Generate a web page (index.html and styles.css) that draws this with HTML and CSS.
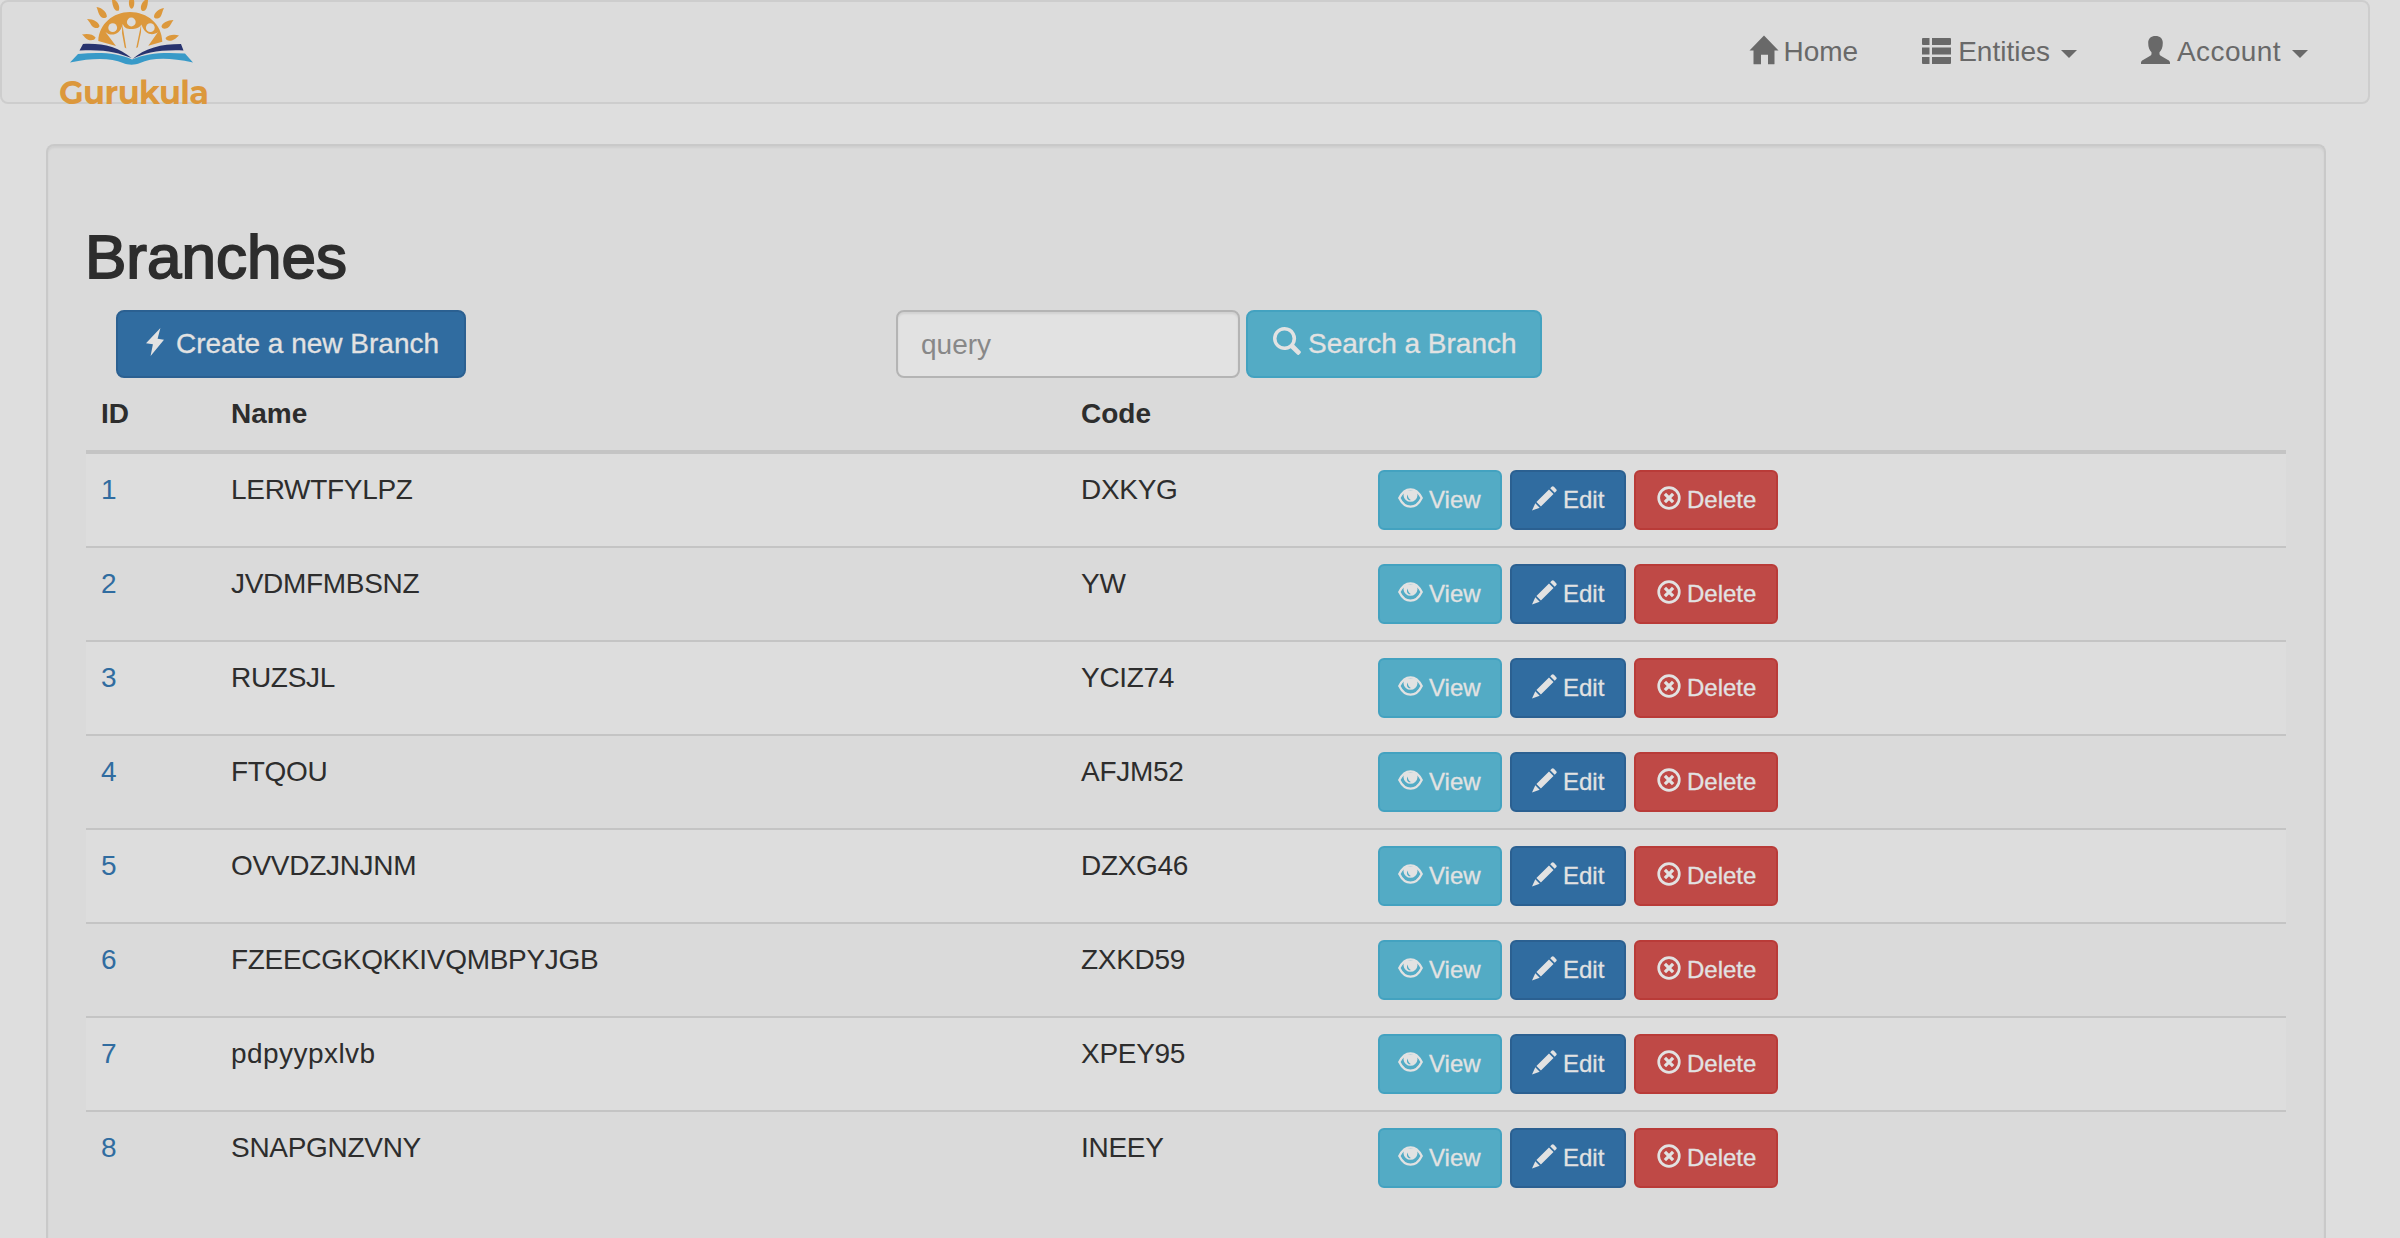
FILE: index.html
```html
<!DOCTYPE html>
<html lang="en">
<head>
<meta charset="utf-8">
<title>Gurukula - Branches</title>
<link rel="stylesheet" href="styles.css">
</head>
<body>
<svg class="sprite" aria-hidden="true">
  <symbol id="i-home" viewBox="0 0 30 30"><path d="M15 .5 29.500 15.500H25.500v13.200a.6.6 0 0 1-.6.6H19v-9.500h-7v9.500H5.100a.6.600 0 0 1-.6-.6V15.500H.5z"/></symbol>
  <symbol id="i-list" viewBox="0 0 29 28"><path d="M1 1h6.500v7H1a1 1 0 0 1-1-1V2a1 1 0 0 1 1-1zM10 1h18a1 1 0 0 1 1 1v5a1 1 0 0 1-1 1H10zM0 10.500h7.500v7H0zM10 10.500h19v7H10zM0 20h7.500v7H1a1 1 0 0 1-1-1zM10 20h19v6a1 1 0 0 1-1 1H10z"/></symbol>
  <symbol id="i-user" viewBox="0 0 29 28"><path d="M14.500 0c4.500 0 7.300 2.600 7.300 6.800 0 4.600-1.200 7.600-3.300 9.400v1.800c0 .8.400 1.300 1.200 1.700l7.300 4.200c1.300.8 2 1.600 2 2.800V28H0v-1.300c0-1.200.7-2 2-2.800l7.300-4.200c.8-.4 1.200-.9 1.200-1.700v-1.800C8.400 14.400 7.200 11.400 7.200 6.800 7.200 2.600 10 0 14.500 0z"/></symbol>
  <symbol id="i-flash" viewBox="0 0 18 28"><path d="M14.400 0 11.600 10.800 18 11.800 4.600 28 6.900 16.200 0 15.200z"/></symbol>
  <symbol id="i-search" viewBox="0 0 28 28"><path fill-rule="evenodd" d="M11.500 0a11.500 11.500 0 0 1 9.700 17.700l6.100 6.200c.8.800.8 1.600.1 2.300l-1.200 1.200c-.7.700-1.500.7-2.300-.1l-6.200-6.100A11.500 11.500 0 1 1 11.500 0zm0 3.500a8 8 0 1 0 0 16 8 8 0 0 0 0-16z"/></symbol>
  <symbol id="i-eye" viewBox="0 0 25 20"><path d="M1.300 10C4 4.500 8 1.300 12.500 1.300S21 4.500 23.700 10C21 15.500 17 18.700 12.500 18.700S4 15.500 1.300 10z" fill="none" stroke="currentColor" stroke-width="2.300"/><path fill-rule="evenodd" d="M7 2.500h11a7 7 0 1 1-11 0zM9.700 6.500c-1.200 1.800-1 4 .6 5.200.8.600 1.800.7 2.500.3-2-1-3-3-3.100-5.500z"/></symbol>
  <symbol id="i-pencil" viewBox="0 0 25 25"><path d="M19.700.8c.7-.7 1.500-.7 2.200 0l2.300 2.400c.7.700.7 1.400 0 2.100l-1.500 1.500L18.200 2.300zM17 3.600 21.500 8.100 8.900 20.500 4.400 16zM3.300 17.300l4.400 4.400L0 24.600z"/></symbol>
  <symbol id="i-remove" viewBox="0 0 24 24"><circle cx="12" cy="12" r="10.300" fill="none" stroke="currentColor" stroke-width="2.700"/><path d="m7.900 7.900 8.200 8.200m0-8.200-8.200 8.200" fill="none" stroke="currentColor" stroke-width="3.300"/></symbol>
</svg>

<nav class="navbar">
  <a class="brand" href="#">
    <svg class="brand-mark" viewBox="0 0 126 66" aria-hidden="true">
      <g fill="#dc983c">
        <path d="M28.300 41C29 24 43 12 60 12s32 12 32.300 29.700L78.300 45.700 88 32C84 35.500 75 36 71.500 24.500 69 28 66 29 61.300 29S54.500 28 52.700 24C50 36 40 36.500 35.500 32L46 46z"/>
        <path d="m52.300 24 4 24.500-1.600-1L52 33zM71.200 24l-5 24 1.600-.8 3.200-15z"/>
        <ellipse cx="61.600" cy="3" rx="2.700" ry="5.800"/>
        <path d="M42 0h3c4 3 5 8 3.800 10.500-3 1.400-6.300-2-6.800-10.500zM78 0h-3c-4 3-5 8-3.300 10.500 3 1.800 6-1 6.300-10.500zM26.500 7c6.500 1 10.300 5.500 10.400 9.500-1.200 2-4 2.200-6.300 0C28.400 14.500 28 10 26.500 7zM94 8c-6 1-10 5-10 9 1 2 4 2 6.300 0C92 15 92 12 94 8zM17 19c7 0 12 3.500 12.500 7-.6 2.500-3 2.400-5.600 1.500C21 26 20 22 17 19zM103.500 20c-6 0-11.500 3-12 6.500.8 2.800 3.700 2.500 6 1.400 3-1.500 3.500-4.900 6-7.900zM12 34.500c5-1.300 11-.5 13.600 3-.8 2.800-4 3-7 2.500-3-.8-4-3.500-6.600-5.500zM109 35.500c-5-1.300-10.500-.7-13.500 2.500.5 2.700 3.500 3 6.500 2.400 3-.8 4.500-2.900 7-4.900z"/>
      </g>
      <g fill="#dcdcdc"><circle cx="42.700" cy="27.700" r="4.400"/><circle cx="61.300" cy="22" r="4.400"/><circle cx="80.300" cy="27.700" r="4.400"/></g>
      <path fill="#27336f" d="M13 44c20-1 35 3 48.500 14C48 52.500 35 49 9.500 50.500zM111 44C91 44 75 48 62.500 59 75 53 89 49.500 113.500 50.500z"/>
      <path fill="#389ac8" d="M8 54c22-2 40-1 54 5.500C76 53 94 52 115 53.500l8 9c-25-5.500-42-4.500-53 .5-5 2.300-12 2.300-17 0-12-5-29-5.500-53-.5z"/>
    </svg>
    <span class="brand-name">Gurukula</span>
  </a>
  <ul class="menu">
    <li><a href="#"><svg class="ic-home"><use href="#i-home"/></svg><span>Home</span></a></li>
    <li><a href="#"><svg class="ic-list"><use href="#i-list"/></svg><span>Entities</span><b class="caret"></b></a></li>
    <li><a href="#"><svg class="ic-user"><use href="#i-user"/></svg><span class="account">Account</span><b class="caret"></b></a></li>
  </ul>
</nav>

<main class="well">
  <h2>Branches</h2>
  <div class="toolbar">
    <button class="btn primary create"><svg class="ic-flash"><use href="#i-flash"/></svg><span>Create a new Branch</span></button>
    <form class="search">
      <input type="text" placeholder="query">
      <button type="button" class="btn info find"><svg class="ic-search"><use href="#i-search"/></svg><span>Search a Branch</span></button>
    </form>
  </div>
  <table>
    <colgroup><col class="c-id"><col class="c-name"><col class="c-code"><col></colgroup>
    <thead><tr><th>ID</th><th>Name</th><th>Code</th><th></th></tr></thead>
    <tbody id="rows"></tbody>
  </table>
</main>
<script src="app.js"></script>
</body>
</html>
```

FILE: styles.css
```css
* { box-sizing: border-box; }
html { overflow: hidden; }
body {
  margin: 0;
  height: 1238px;
  overflow: hidden;
  background: #dedede;
  color: #2d2d2d;
  font: 28px/40px "Liberation Sans", Arial, sans-serif;
}
a { color: #306ca0; text-decoration: none; }
svg { fill: currentColor; flex: none; display: block; }
.sprite { position: absolute; width: 0; height: 0; }

.navbar {
  width: 2370px;
  height: 104px;
  border: 2px solid #cdcdcd;
  border-radius: 8px;
  background: #dcdcdc;
  display: flex;
  justify-content: space-between;
  padding: 0 30px 0 56px;
}
.brand { display: flex; flex-direction: column; margin-top: -2px; height: 110px; color: #dc983c; }
.brand-mark { width: 126px; height: 66px; margin-left: 12px; }
.brand-name { font: 700 32px/40px Montserrat, "Open Sans", sans-serif; letter-spacing: -.6px; margin: 7px 0 0 1px; white-space: nowrap; }
.menu { display: flex; list-style: none; margin: 0; padding: 0; gap: 4px; }
.menu a { display: flex; padding: 30px; color: #696969; height: 100px; }
.menu svg { margin-right: 7px; }
.menu .ic-home { width: 30px; height: 30px; margin: 3px 4px 0 0; }
.ic-list { width: 29px; height: 28px; margin-top: 5px; }
.ic-user { width: 29px; height: 28px; margin-top: 4px; }
.account { letter-spacing: .4px; }
.caret { width: 16px; height: 8px; margin: 18px 0 0 11px; background: #696969; clip-path: polygon(0 0, 100% 0, 50% 100%); }

.well {
  width: 2280px;
  height: 1094px;
  margin: 40px 0 0 46px;
  padding: 38px 38px 0;
  border: 2px solid #c9c9c9;
  border-bottom: 0;
  border-radius: 8px 8px 0 0;
  background: #dadada;
  box-shadow: inset 0 2px 2px rgba(0, 0, 0, .05);
}
h2 { margin: 40px 0 20px -1px; font-size: 62px; line-height: 66px; font-weight: 400; -webkit-text-stroke: 1.8px #2d2d2d; }
.toolbar { display: flex; padding-left: 30px; height: 68px; }
.btn {
  display: inline-flex;
  border: 2px solid;
  border-radius: 8px;
  color: #e2e2e2;
  font: inherit;
  -webkit-text-stroke: .3px;
  white-space: nowrap;
  padding: 12px 0 0;
}
.primary { background: #306ca0; border-color: #2b6091; }
.info { background: #53abc5; border-color: #43a2c0; }
.danger { background: #bf4946; border-color: #b93b38; }
.create { width: 350px; height: 68px; padding-left: 28px; }
.ic-flash { width: 18px; height: 28px; margin: 4px 12px 0 0; }
.search { display: flex; margin-left: 430px; gap: 6px; }
.search input {
  width: 344px;
  height: 68px;
  border: 2px solid #b4b4b4;
  border-radius: 8px;
  background: #e2e2e2;
  box-shadow: inset 0 2px 2px rgba(0, 0, 0, .075);
  font: inherit;
  padding: 1px 23px 0;
}
.search input::placeholder { color: #888; opacity: 1; }
.find { width: 296px; padding-left: 25px; }
.ic-search { width: 28px; height: 28px; margin: 3px 7px 0 0; }

table { width: 2200px; table-layout: fixed; border-collapse: separate; border-spacing: 0; }
.c-id { width: 130px; }
.c-name { width: 849px; }
.c-code { width: 297px; }
th, td { padding: 16px 16px 16px 15px; text-align: left; vertical-align: top; line-height: 40px; }
th:nth-child(n+3), td:nth-child(n+3) { padding-left: 16px; }
th { border-bottom: 4px solid #c4c4c4; height: 76px; }
td { height: 94px; border-bottom: 2px solid #c4c4c4; }
tr:last-child td { border-bottom: 0; }
tbody tr:nth-child(odd) { background: #ddd; }
.upper { letter-spacing: -.3px; }
.lower { letter-spacing: .45px; }
.actions { display: flex; gap: 8px; }
.actions .btn { height: 60px; border-radius: 6px; font-size: 24px; line-height: 36px; padding-top: 10px; }
.actions .view { width: 124px; padding-left: 18px; }
.actions .edit { width: 116px; padding-left: 20px; }
.actions .delete { width: 144px; padding-left: 21px; }
.view svg { width: 25px; height: 20px; margin: 6px 6px 0 0; }
.edit svg { width: 25px; height: 25px; margin: 4px 6px 0 0; }
.delete svg { width: 24px; height: 24px; margin: 4px 6px 0 0; }
```

FILE: app.js
```js
const branches = [
  ["LERWTFYLPZ", "DXKYG"],
  ["JVDMFMBSNZ", "YW"],
  ["RUZSJL", "YCIZ74"],
  ["FTQOU", "AFJM52"],
  ["OVVDZJNJNM", "DZXG46"],
  ["FZEECGKQKKIVQMBPYJGB", "ZXKD59"],
  ["pdpyypxlvb", "XPEY95"],
  ["SNAPGNZVNY", "INEEY"]
];
const button = (kind, name, icon, label) =>
  `<button class="btn ${kind} ${name}"><svg><use href="#i-${icon}"/></svg><span>${label}</span></button>`;
const caseClass = text => text === text.toUpperCase() ? "upper" : "lower";
document.getElementById("rows").innerHTML = branches.map(([name, code], i) =>
  `<tr><td><a href="#">${i + 1}</a></td><td class="${caseClass(name)}">${name}</td><td class="upper">${code}</td><td><div class="actions">` +
  button("info", "view", "eye", "View") +
  button("primary", "edit", "pencil", "Edit") +
  button("danger", "delete", "remove", "Delete") +
  `</div></td></tr>`).join("");
```
